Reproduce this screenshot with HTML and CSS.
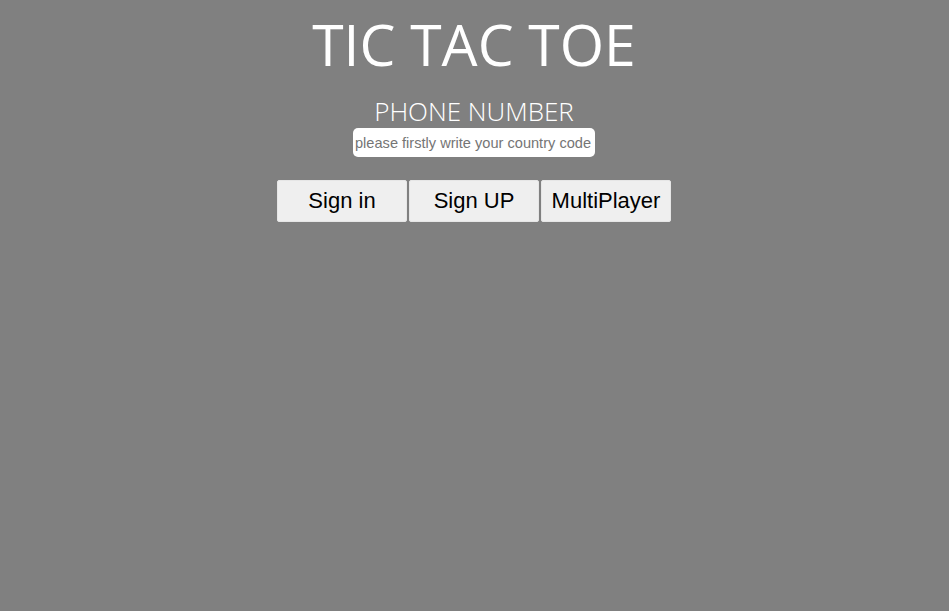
FILE: index.html
```html
<!DOCTYPE html>
<html>
<head>
<meta charset="utf-8">
<link rel="stylesheet" href="styles.css">
</head>
<body>
<div class="page">
  <h1 class="title">TIC TAC TOE</h1>
  <div class="label">PHONE NUMBER</div>
  <input class="phone" type="text" placeholder="please firstly write your country code">
  <div class="buttons">
    <button class="btn">Sign in</button>
    <button class="btn">Sign UP</button>
    <button class="btn">MultiPlayer</button>
  </div>
</div>
</body>
</html>
```
FILE: styles.css
```css
html, body {
  margin: 0;
  padding: 0;
  background: #808080;
  height: 100%;
}
.page {
  display: flex;
  flex-direction: column;
  align-items: center;
  padding-right: 1px;
  font-family: "Open Sans", "Noto Sans", sans-serif;
}
.title {
  margin: 8px 0 0 0;
  font-weight: 400;
  font-size: 57px;
  line-height: 72px;
  color: #ffffff;
}
.label {
  margin-top: 16px;
  font-size: 26px;
  font-weight: 300;
  line-height: 30px;
  color: #ffffff;
}
.phone {
  margin-top: 2px;
  width: 242px;
  height: 29px;
  box-sizing: border-box;
  border: none;
  border-radius: 5px;
  background: #ffffff;
  padding: 0 2px;
  font-family: "Liberation Sans", Arial, sans-serif;
  font-size: 14.6px;
  outline: none;
}
.phone::placeholder {
  color: #757575;
}
.buttons {
  margin-top: 23px;
  display: flex;
  gap: 2px;
}
.btn {
  width: 130px;
  height: 42px;
  box-sizing: border-box;
  background: #efefef;
  border: 1px solid #e6e6e6;
  border-radius: 2px;
  font-family: "Liberation Sans", Arial, sans-serif;
  font-size: 22px;
  color: #000000;
  padding: 0;
}
```
